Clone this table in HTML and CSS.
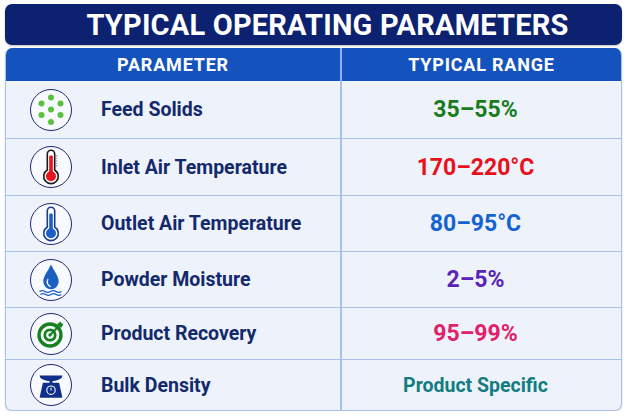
FILE: index.html
```html
<!DOCTYPE html>
<html>
<head>
<meta charset="utf-8">
<link rel="stylesheet" href="styles.css">
</head>
<body>
<div class="page">
  <div class="title">TYPICAL OPERATING PARAMETERS</div>
  <div class="table">
    <div class="th th-left">PARAMETER</div>
    <div class="th th-right">TYPICAL RANGE</div>

    <div class="cell param r1">
      <span class="icon">
        <svg viewBox="0 0 40 40" width="40" height="40">
          <g fill="#5cbf3f">
            <circle cx="20" cy="7.5" r="3"/>
            <circle cx="10.5" cy="13.5" r="3"/>
            <circle cx="29.5" cy="13.5" r="3"/>
            <circle cx="20" cy="19.5" r="3"/>
            <circle cx="10.5" cy="25" r="3"/>
            <circle cx="29.5" cy="25" r="3"/>
            <circle cx="20" cy="32" r="3"/>
          </g>
        </svg>
      </span>
      <span class="label">Feed Solids</span>
    </div>
    <div class="cell value r1 green">35–55%</div>

    <div class="cell param r2">
      <span class="icon">
        <svg viewBox="0 0 40 40" width="40" height="40">
          <path d="M16.3 7 a3.7 3.7 0 0 1 7.4 0 v16 a7.3 7.3 0 1 1 -7.4 0 z" fill="#fff" stroke="#1a1a1a" stroke-width="1.6"/>
          <rect x="18.2" y="8.5" width="3.6" height="18" rx="1.2" fill="#e8141c"/>
          <circle cx="20" cy="29.2" r="5" fill="#e8141c"/>
          <g stroke="#6a7390" stroke-width="0.8">
            <line x1="24.5" y1="9" x2="26.5" y2="9"/>
            <line x1="24.5" y1="11.5" x2="26" y2="11.5"/>
            <line x1="24.5" y1="14" x2="26.5" y2="14"/>
            <line x1="24.5" y1="16.5" x2="26" y2="16.5"/>
            <line x1="24.5" y1="19" x2="26.5" y2="19"/>
          </g>
        </svg>
      </span>
      <span class="label">Inlet Air Temperature</span>
    </div>
    <div class="cell value r2 red">170–220°C</div>

    <div class="cell param r3">
      <span class="icon">
        <svg viewBox="0 0 40 40" width="40" height="40">
          <path d="M16.3 7 a3.7 3.7 0 0 1 7.4 0 v16 a7.3 7.3 0 1 1 -7.4 0 z" fill="#fff" stroke="#1a3c8f" stroke-width="1.6"/>
          <rect x="18.2" y="9.5" width="3.6" height="17" rx="1.2" fill="#1b5fc8"/>
          <circle cx="20" cy="29.2" r="5" fill="#1b5fc8"/>
        </svg>
      </span>
      <span class="label">Outlet Air Temperature</span>
    </div>
    <div class="cell value r3 blue">80–95°C</div>

    <div class="cell param r4">
      <span class="icon">
        <svg viewBox="0 0 40 40" width="40" height="40">
          <path d="M20 4.5 C17 11 12.3 16 12.3 21.5 a7.7 7.7 0 0 0 15.4 0 C27.7 16 23 11 20 4.5z" fill="#1b5fc0"/>
          <path d="M16.8 19.5 a5 5 0 0 0 2.5 7" fill="none" stroke="#fff" stroke-width="1.3" stroke-linecap="round"/>
          <path d="M8.5 31.5 q2.75 -1.8 5.5 0 t5.5 0 t5.5 0 t5.5 0" fill="none" stroke="#1b5fc0" stroke-width="1.3"/>
          <path d="M9.5 34.5 q2.6 -1.6 5.2 0 t5.2 0 t5.2 0 t5.2 0" fill="none" stroke="#1b5fc0" stroke-width="1.3"/>
        </svg>
      </span>
      <span class="label">Powder Moisture</span>
    </div>
    <div class="cell value r4 purple">2–5%</div>

    <div class="cell param r5">
      <span class="icon">
        <svg viewBox="0 0 40 40" width="40" height="40">
          <circle cx="19" cy="21" r="11" fill="none" stroke="#17801f" stroke-width="3.4"/>
          <circle cx="19" cy="21" r="5.2" fill="none" stroke="#17801f" stroke-width="2.8"/>
          <circle cx="19" cy="21" r="1.7" fill="#17801f"/>
          <line x1="19" y1="21" x2="28" y2="12" stroke="#17801f" stroke-width="1.9"/>
          <path d="M26 10 l4 -2.5 l0.5 2 l2 0.5 l-2.5 4 z" fill="#17801f"/>
        </svg>
      </span>
      <span class="label">Product Recovery</span>
    </div>
    <div class="cell value r5 pink">95–99%</div>

    <div class="cell param r6">
      <span class="icon">
        <svg viewBox="0 0 40 40" width="40" height="40">
          <path d="M8.5 10.5 h23 a11.5 5.8 0 0 1 -23 0z" fill="#0f2f8a"/>
          <rect x="18.5" y="15" width="3" height="4" fill="#0f2f8a"/>
          <path d="M12.5 18.5 h15 l3 13.5 h-21 z" fill="#0f2f8a" stroke="#0f2f8a" stroke-linejoin="round" stroke-width="1.5"/>
          <circle cx="20" cy="25.2" r="4.2" fill="none" stroke="#fff" stroke-width="1.1"/>
          <line x1="20" y1="22.8" x2="20" y2="25.5" stroke="#fff" stroke-width="1.1"/>
        </svg>
      </span>
      <span class="label">Bulk Density</span>
    </div>
    <div class="cell value r6 teal small">Product Specific</div>
  </div>
</div>
</body>
</html>
```

FILE: styles.css
```css
html, body {
  margin: 0;
  padding: 0;
  background: #ffffff;
}

body {
  font-family: "Roboto", "Liberation Sans", sans-serif;
}

.page {
  width: 617px;
  padding: 4px 5px 0 5px;
  display: flex;
  flex-direction: column;
  gap: 3px;
}

.title {
  height: 41px;
  background: #0c2270;
  border-radius: 7px;
  color: #ffffff;
  font-weight: 700;
  font-size: 29px;
  letter-spacing: 0.2px;
  padding-left: 28px;
  display: flex;
  align-items: center;
  justify-content: center;
  box-shadow: 0 1px 2px rgba(0, 0, 0, 0.25);
}

.table {
  display: grid;
  grid-template-columns: 336px 1fr;
  grid-template-rows: 33px 58px 57px 56px 56px 52px 50px;
  border: 1px solid #a9bfe9;
  border-top: none;
  border-radius: 7px;
  overflow: hidden;
  background: #eef3fb;
  box-shadow: 0 1px 2px rgba(0, 40, 120, 0.15);
}

.th {
  background: #1453bd;
  color: #ffffff;
  font-weight: 700;
  font-size: 18px;
  letter-spacing: 0.8px;
  display: flex;
  align-items: center;
  justify-content: center;
}

.th-left {
  border-right: 2px solid #8fb0e8;
}

.cell {
  display: flex;
  align-items: center;
  border-bottom: 1px solid #a9c0ea;
}

.r6 {
  border-bottom: none;
}

.param {
  border-right: 2px solid #a9c0ea;
  padding-left: 24px;
  gap: 29px;
}

.icon {
  width: 40px;
  height: 40px;
  border: 1.5px solid #1c2a72;
  border-radius: 50%;
  background: #f8faff;
  display: flex;
  align-items: center;
  justify-content: center;
  flex: none;
}

.label {
  color: #13296b;
  font-weight: 700;
  font-size: 19.5px;
}

.value {
  justify-content: center;
  padding-right: 12px;
  font-weight: 700;
  font-size: 23px;
}

.value.small {
  font-size: 19.5px;
}

.green { color: #1a7c1c; }
.red { color: #e8111b; }
.blue { color: #1563d2; }
.purple { color: #5a22b8; }
.pink { color: #e0206c; }
.teal { color: #137c80; }
```
